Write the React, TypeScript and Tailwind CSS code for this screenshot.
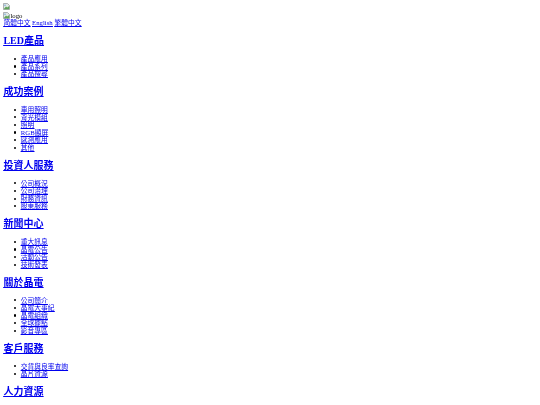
const sections = [
  { lead: "LED", title: "產品", items: ["產品應用", "產品系列", "產品搜尋"] },
  { title: "成功案例", items: ["車用照明", "背光模組", "照明", "RGB顯屏", "感測應用", "其他"] },
  { title: "投資人服務", items: ["公司概況", "公司治理", "財務資訊", "股東服務"] },
  { title: "新聞中心", items: ["重大訊息", "晶電公告", "活動公告", "技術發表"] },
  { title: "關於晶電", items: ["公司簡介", "晶電大事紀", "晶電組織", "全球據點", "影音專區"] },
  { title: "客戶服務", items: ["交貨與良率查詢", "晶片資源"] },
  { title: "人力資源", items: [] as string[] },
]

function BrokenImage() {
  return (
    <svg width="7" height="7" viewBox="0 0 7 7" className="block shrink-0">
      <path d="M0.5 0.5H4.5L6.5 2.5V6.5H0.5Z" fill="#dfe8e4" stroke="#8f9498" strokeWidth="0.7" />
      <path d="M0.8 6L3 3.4L4.2 4.6L6.2 3V6.2H0.8Z" fill="#5fa35a" />
      <circle cx="2" cy="2.2" r="0.8" fill="#7fa8e0" />
    </svg>
  )
}

export default function App() {
  return (
    <div className="h-[405px] overflow-hidden bg-white px-[3.4px] pt-[3.4px] text-[6.75px] leading-[7.6px] text-black blur-[0.2px] [font-family:'Liberation_Serif','Noto_Sans_CJK_TC',serif]">
      <div className="h-[8.5px]">
        <BrokenImage />
      </div>
      <div className="flex h-[7.5px] items-center">
        <BrokenImage />
        <span>logo</span>
      </div>
      <div className="flex gap-[1.7px] text-[#0000ee] underline">
        <a href="#">简體中文</a>
        <a href="#">English</a>
        <a href="#">繁體中文</a>
      </div>
      {sections.map((section) => (
        <div key={section.title}>
          <h2 className="mt-[8.3px] mb-[8.3px] text-[10px] leading-[11.5px] font-semibold text-[#0000ee] underline">
            <a href="#">
              {section.lead && <span className="font-bold">{section.lead}</span>}
              {section.title}
            </a>
          </h2>
          <ul className="my-[6.75px] pl-[10.3px]">
            {section.items.map((item) => (
              <li key={item} className="flex h-[7.6px] items-center gap-[5px] text-[#0000ee] underline">
                <span className="h-[2.1px] w-[2.1px] rounded-full bg-black" />
                <a href="#">{item}</a>
              </li>
            ))}
          </ul>
        </div>
      ))}
    </div>
  )
}
